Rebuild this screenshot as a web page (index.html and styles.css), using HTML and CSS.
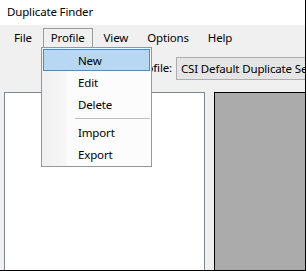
FILE: index.html
```html
<!DOCTYPE html>
<html>
<head>
<meta charset="utf-8">
<link rel="stylesheet" href="styles.css">
</head>
<body>
<div class="window">
  <div class="titlebar">Duplicate Finder</div>
  <div class="menubar">
    <span class="menu">File</span>
    <span class="menu open">Profile</span>
    <span class="menu">View</span>
    <span class="menu">Options</span>
    <span class="menu">Help</span>
  </div>
  <div class="toolbar">
    <span class="label">Profile:</span>
    <div class="combo">CSI Default Duplicate Search</div>
  </div>
  <div class="panels">
    <div class="listpanel"></div>
    <div class="graypanel"></div>
  </div>
  <div class="dropdown">
    <div class="item hot">New</div>
    <div class="item">Edit</div>
    <div class="item">Delete</div>
    <div class="sep"></div>
    <div class="item">Import</div>
    <div class="item">Export</div>
  </div>
</div>
</body>
</html>
```
FILE: styles.css
```css
html, body {
  margin: 0;
  padding: 0;
}
body {
  width: 306px;
  height: 271px;
  overflow: hidden;
  font-family: "Noto Sans", "Liberation Sans", sans-serif;
  font-size: 11.5px;
  letter-spacing: -0.15px;
  color: #000;
}
.window {
  position: relative;
  width: 306px;
  height: 271px;
  box-sizing: border-box;
  border-right: 1px solid #000;
  border-bottom: 1px solid #000;
  background: #f0f0f0;
  display: flex;
  flex-direction: column;
  overflow: hidden;
}
.titlebar {
  height: 25px;
  flex: none;
  background: #fff;
  padding-left: 7px;
  line-height: 24px;
}
.menubar {
  height: 22px;
  flex: none;
  display: flex;
  align-items: flex-start;
  padding-top: 3px;
  padding-left: 6px;
  box-sizing: border-box;
}
.menu {
  padding: 0 7px;
  height: 19px;
  line-height: 17px;
  box-sizing: border-box;
  border: 1px solid transparent;
  border-bottom: none;
  margin-right: 3px;
}
.menu.open {
  border-color: #999;
  background: #f0f0f0;
}
.toolbar {
  height: 45px;
  flex: none;
  display: flex;
  align-items: flex-start;
  padding-top: 10px;
  box-sizing: border-box;
  overflow: hidden;
}
.label {
  width: 172px;
  flex: none;
  text-align: right;
  line-height: 22px;
}
.combo {
  margin-left: 4px;
  height: 23px;
  box-sizing: border-box;
  border: 1px solid #adadad;
  border-right: none;
  background: #e5e5e5;
  padding-left: 4px;
  line-height: 21px;
  white-space: nowrap;
  overflow: hidden;
  flex: 1;
  min-width: 0;
}
.panels {
  flex: 1;
  display: flex;
  padding-left: 4px;
}
.listpanel {
  width: 201px;
  box-sizing: border-box;
  border: 1px solid #82878f;
  border-bottom: none;
  background: #fff;
}
.graypanel {
  margin-left: 9px;
  flex: 1;
  border-top: 1px solid #000;
  border-left: 1px solid #000;
  background: #ababab;
}
.dropdown {
  position: absolute;
  left: 41px;
  top: 47px;
  width: 111px;
  box-sizing: border-box;
  border: 1px solid #979797;
  background: linear-gradient(to right, #f0f0f0 0, #f7f7f7 24px, #fcfcfc 25px, #fcfcfc 100%);
  padding: 1px;
}
.item {
  height: 22px;
  line-height: 21px;
  padding-left: 34px;
  box-sizing: border-box;
  border: 1px solid transparent;
}
.item.hot {
  background: #b7d7f3;
  border-color: #3c8fdc;
}
.sep {
  height: 6px;
  margin-left: 32px;
  box-sizing: border-box;
  border-top: 3px solid transparent;
  border-bottom: 2px solid transparent;
  background: #bdbdbd;
  background-clip: padding-box;
}
```
